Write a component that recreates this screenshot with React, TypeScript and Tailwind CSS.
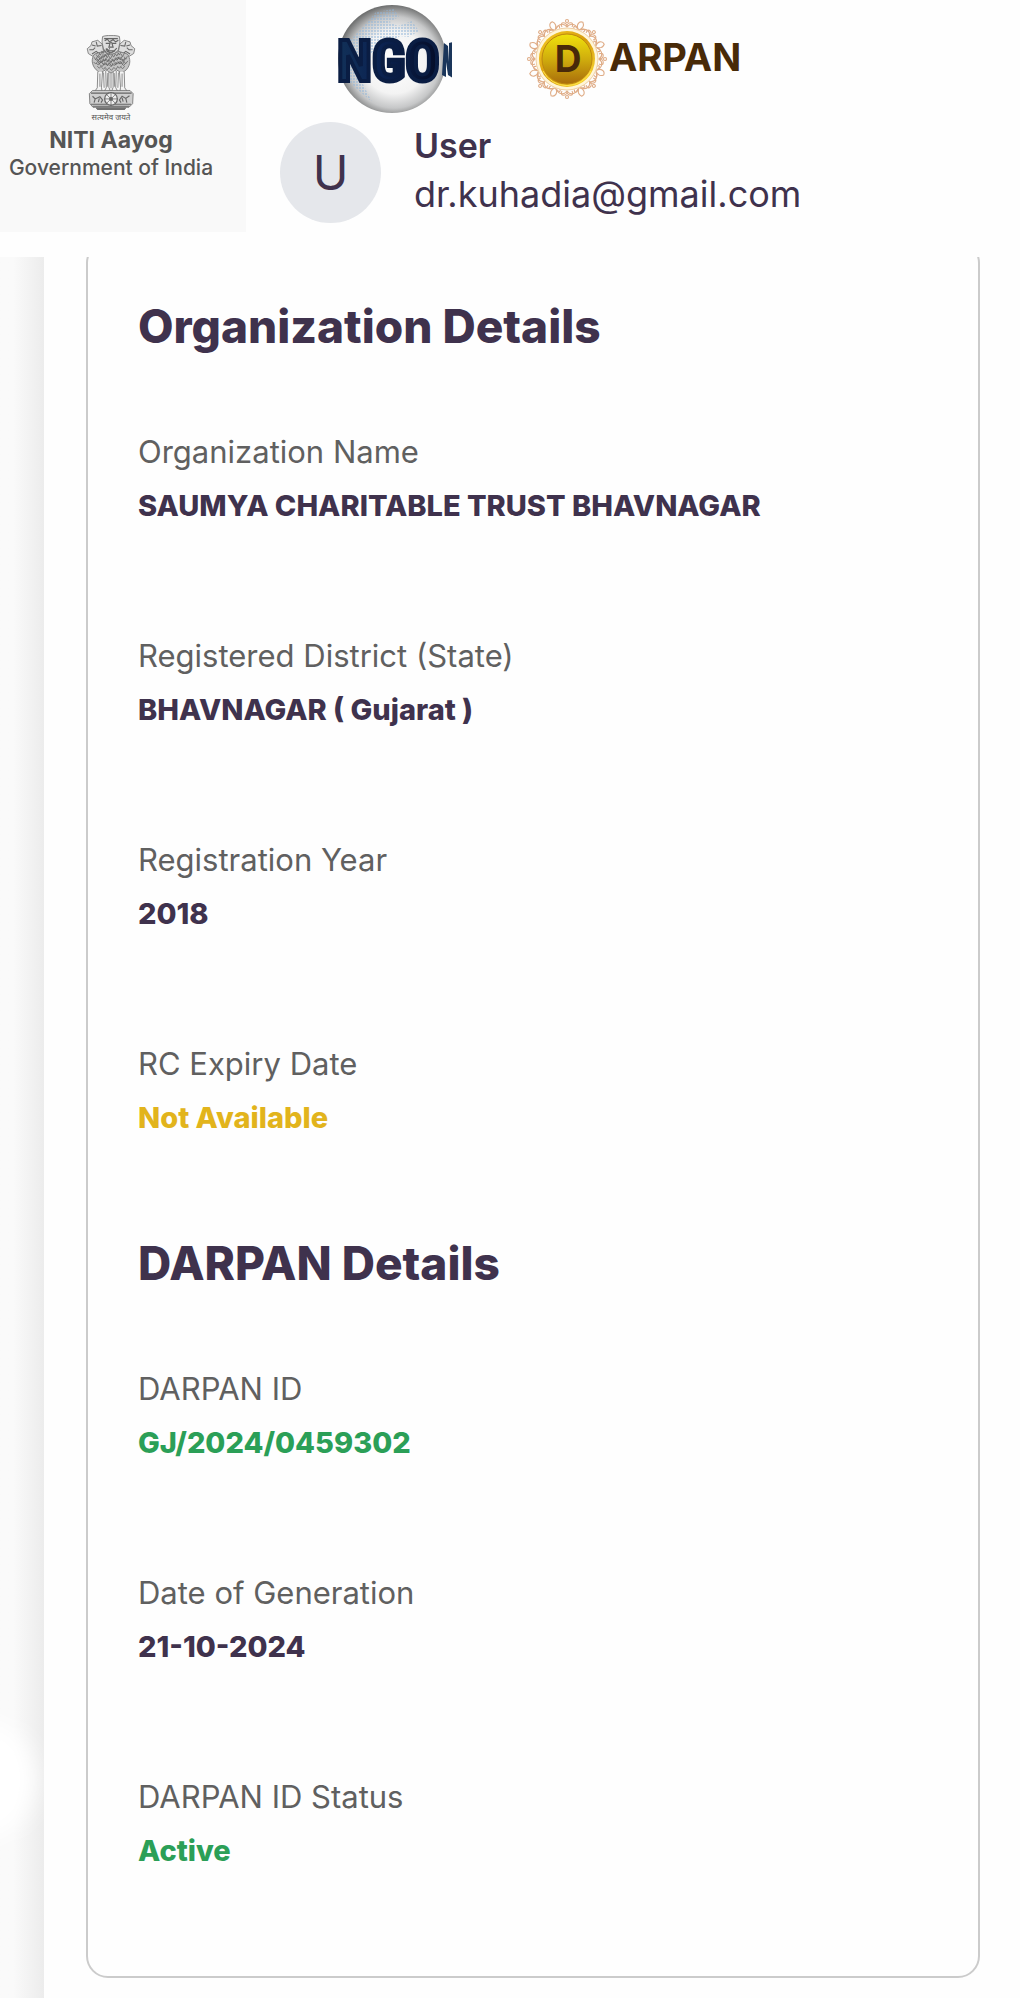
import React from "react";

type Tone = "default" | "warning" | "success";

const toneClass: Record<Tone, string> = {
  default: "text-[#3f324d]",
  warning: "text-[#e2b41c]",
  success: "text-[#2b9f57]",
};

function Emblem() {
  const mane = [
    [38, 25], [43, 23], [33, 28], [28, 31], [23, 35], [19, 40], [24, 42], [29, 38], [35, 35], [41, 36],
    [47, 38], [53, 35], [59, 33], [64, 31], [70, 34], [76, 39], [72, 43], [66, 40], [60, 40], [54, 43],
    [48, 45], [42, 43], [36, 42], [31, 45], [26, 48], [34, 50], [41, 51], [49, 52], [57, 50], [64, 48], [70, 49],
  ];
  return (
    <svg viewBox="0 0 96 142" className="h-[75px] w-[52px]" fill="none" stroke="#666" strokeWidth="1.4" aria-label="State Emblem of India" role="img">
      <path d="M32 3C38 0 58 0 64 3L65 13L62 28L55 36H41L34 28L31 13Z" fill="#dedede" />
      <path d="M35 7h26M36 11l5-3 4 5 7-4 5 4 5-3M38 16h7M51 16h7M47 13l-3 10h8l-3-10M38 26l6 4 10 0 5-5M40 31l8 3 8-4" strokeWidth="2.2" />
      <path d="M31 17L23 10L12 13L10 20L3 26L5 35L13 40L24 39L34 31Z" fill="#dedede" />
      <path d="M65 17L73 10L84 13L86 20L93 26L91 35L83 40L72 39L62 31Z" fill="#dedede" />
      <path d="M12 19l7 2M7 28h7l4-4M12 36l8-5 6 5M20 13l2 8 8-1M84 19l-7 2M89 28h-7l-4-4M84 36l-8-5-6 5M76 13l-2 8-8-1" strokeWidth="2" />
      <path d="M17 36C10 44 11 57 20 66L27 72L38 66L48 72L58 66L69 72L77 66C86 56 85 44 79 36L62 31L48 38L34 31Z" fill="#c4c4c4" />
      {mane.map(([x, y], i) => (
        <path key={i} d={`M${x - 3} ${y + 2}l3 5 3-6M${x - 4} ${y + 11}l4 4 4-5`} strokeWidth="1.5" />
      ))}
      <path d="M23 70L22 100L17 107H31L30 99L32 69M38 68L39 100L35 107H47L44 99L44 70M52 70L52 99L49 107H61L57 100L58 68M64 69L66 99L65 107H79L74 100L73 70" fill="#f4f4f4" />
      <path d="M27 73v25M42 72l-1 26M54 72l1 26M69 73v25M34 71l1 29M62 71l-1 29M48 72v29" />
      <path d="M13 105L84 105L90 111L89 130L82 137H14L8 130L7 111Z" fill="#cfcfcf" />
      <path d="M10 110H87M10 131H86M13 135H83" strokeWidth="2" />
      <circle cx="48" cy="121" r="12" fill="#eee" strokeWidth="2.4" />
      <path d="M48 109v24M36 121h24M39.5 112.500l17 17M56.500 112.500l-17 17" />
      <circle cx="48" cy="121" r="3" fill="#666" />
      <path d="M13 116l5 5 9-4 5 6-3 5M18 121l-2 7M26 120l-2 7M83 115l-7 5-7-4-5 7 3 5M76 120l2 8M69 119l2 7" strokeWidth="2.2" />
      <path d="M20 138H76L73 142H23Z" fill="#777" />
    </svg>
  );
}

function NgoLogo() {
  return (
    <svg viewBox="0 0 120 114" className="h-[114px] w-[120px] shrink-0" role="img" aria-label="NGO">
      <defs>
        <radialGradient id="globe" cx="0.52" cy="0.53" r="0.53">
          <stop offset="0" stopColor="#fff" />
          <stop offset="0.55" stopColor="#f3f3f3" />
          <stop offset="0.8" stopColor="#c6c7c8" />
          <stop offset="1" stopColor="#6f7070" />
        </radialGradient>
        <pattern id="land" width="3" height="3" patternUnits="userSpaceOnUse">
          <rect width="2" height="2" fill="#8fb4d8" />
        </pattern>
        <linearGradient id="navy" x1="0" x2="1">
          <stop offset="0" stopColor="#123158" />
          <stop offset="0.4" stopColor="#0b2352" />
          <stop offset="1" stopColor="#050d28" />
        </linearGradient>
      </defs>
      <circle cx="60" cy="59" r="54" fill="url(#globe)" />
      <path d="M30 28L44 12L62 9L67 17L57 22L66 26L80 21L87 31L77 37L68 36L59 43L47 42L42 51L33 58L36 73L31 84L40 102L25 89L14 78L10 60L17 41Z" fill="url(#land)" opacity="0.5" />
      <text x="5" y="81" fontSize="57" fill="url(#navy)" stroke="#0a1d43" strokeWidth="4" className="font-['Liberation_Sans_Narrow','Roboto_Condensed','Liberation_Sans',sans-serif] font-bold">NGO</text>
      <path d="M112 43L116 46L117 62V43L121 42V78L116 75L114 62V77L110 75Z" fill="#1a355a" />
    </svg>
  );
}

function DarpanLogo() {
  return (
    <div className="flex items-center">
      <svg viewBox="-42 -42 84 84" className="h-[84px] w-[84px] shrink-0" role="img" aria-label="D">
        <defs>
          <linearGradient id="gold" x1="0" x2="0" y1="0" y2="1">
            <stop offset="0" stopColor="#f0e20c" />
            <stop offset="0.5" stopColor="#d0ad0d" />
            <stop offset="1" stopColor="#a96d0b" />
          </linearGradient>
          <linearGradient id="rim" x1="0" x2="1" y1="0" y2="1">
            <stop offset="0" stopColor="#f8cf25" />
            <stop offset="0.5" stopColor="#d69a0c" />
            <stop offset="1" stopColor="#ffe33c" />
          </linearGradient>
        </defs>
        <g fill="none" stroke="#dfac86" strokeWidth="1.1">
          {[0, 1, 2, 3, 4, 5, 6, 7].map((i) => (
            <g key={i} transform={`rotate(${i * 45})`}>
              <path d="M-11 -30C-8 -36 -3 -36 0 -32C3 -36 8 -36 11 -30M-5 -32C-8 -38 0 -37 0 -33C0 -37 8 -38 5 -32" />
              <circle cx="0" cy="-38" r="1.500" />
              <path transform="rotate(22)" d="M0 -31C-5 -35 -3 -40 1 -40C4 -37 3 -34 0 -31M0 -31C5 -36 7 -34 5 -31M0 -31C-6 -35 -7 -32 -4 -30" />
            </g>
          ))}
        </g>
        <circle r="31" fill="#fff5d8" stroke="#efcfa5" />
        <circle r="28" fill="url(#rim)" />
        <circle r="25" fill="url(#gold)" stroke="#bd870e" />
        <path d="M-24 12A27 27 0 0 0 24 12" fill="none" stroke="#ffe54b" />
        <text x="1" y="13" textAnchor="middle" fontSize="37" fill="#482809" className="font-[Inter,sans-serif] font-bold">D</text>
      </svg>
      <span className="pb-1 text-[38px] leading-[48px] font-bold text-[#482a08]">ARPAN</span>
    </div>
  );
}

function Field({ label, value, tone = "default" }: { label: string; value: string; tone?: Tone }) {
  return (
    <div className="pt-px leading-[54px]">
      <dt className="text-[31px] text-[#606060]">{label}</dt>
      <dd className={`text-[29px] font-extrabold ${toneClass[tone]}`}>{value}</dd>
    </div>
  );
}

function Section({ title, children }: { title: string; children: React.ReactNode }) {
  return (
    <section>
      <h2 className="mb-[66px] text-[46px] leading-[64px] font-extrabold text-[#3f324d]">{title}</h2>
      <dl className="flex flex-col gap-[95px]">{children}</dl>
    </section>
  );
}

export default function App() {
  return (
    <div className="flex min-h-screen flex-col bg-[#fefefe] font-[Inter,sans-serif]">
      <header className="flex items-start pb-[25px]">
        <div className="flex h-[232px] w-[246px] shrink-0 flex-col items-center bg-[#f9f9f9] pt-[35px] pr-6 text-[#555]">
          <Emblem />
          <span className="text-[8px] leading-[16px] font-[Noto_Sans_Devanagari,Noto_Sans,sans-serif]">सत्यमेव जयते</span>
          <span className="text-[23px] leading-[28px] font-bold">NITI Aayog</span>
          <span className="text-[21px] leading-[28px] font-medium whitespace-nowrap">Government of India</span>
        </div>
        <div className="flex min-w-0 flex-1 flex-col pl-[34px]">
          <div className="flex h-[122px] items-start gap-[73px] pl-[52px]">
            <NgoLogo />
            <div className="pt-[17px]">
              <DarpanLogo />
            </div>
          </div>
          <div className="flex items-start gap-[33px]">
            <div className="flex size-[101px] shrink-0 items-center justify-center rounded-full bg-[#e5e7eb] text-[48px] text-[#3f324d]">U</div>
            <div className="leading-[48px] text-[#3f324d]">
              <p className="text-[34px] font-semibold">User</p>
              <p className="text-[36px]">dr.kuhadia@gmail.com</p>
            </div>
          </div>
        </div>
      </header>

      <main className="flex flex-1 overflow-hidden">
        <div className="relative w-11 shrink-0 overflow-hidden bg-linear-to-r from-[#fafafa] from-30% to-[#ececec]">
          <div className="absolute right-2 bottom-[158px] size-[120px] rounded-full bg-white blur-md" />
        </div>
        <div className="flex-1 pr-10 pb-5 pl-[42px]">
          <div className="-mt-4 flex flex-col gap-[86px] rounded-[22px] border-2 border-[#cbcbcb] px-[50px] pt-[51px] pb-[98px]">
            <Section title="Organization Details">
              <Field label="Organization Name" value="SAUMYA CHARITABLE TRUST BHAVNAGAR" />
              <Field label="Registered District (State)" value="BHAVNAGAR ( Gujarat )" />
              <Field label="Registration Year" value="2018" />
              <Field label="RC Expiry Date" value="Not Available" tone="warning" />
            </Section>
            <Section title="DARPAN Details">
              <Field label="DARPAN ID" value="GJ/2024/0459302" tone="success" />
              <Field label="Date of Generation" value="21-10-2024" />
              <Field label="DARPAN ID Status" value="Active" tone="success" />
            </Section>
          </div>
        </div>
      </main>
    </div>
  );
}
